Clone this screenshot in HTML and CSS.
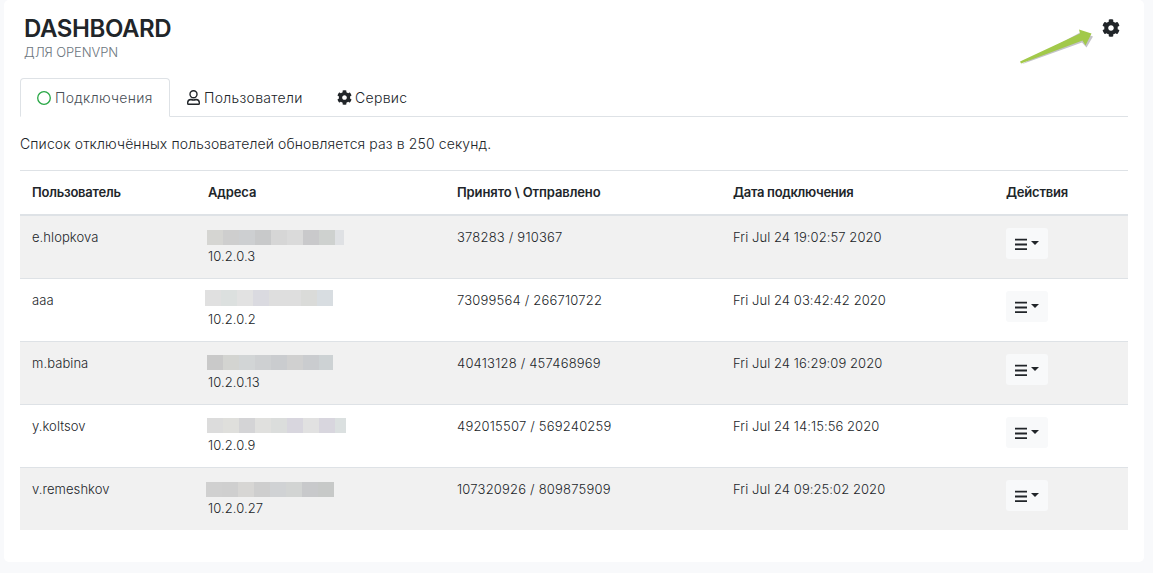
FILE: index.html
```html
<!DOCTYPE html>
<html lang="ru">
<head>
<meta charset="utf-8">
<title>Dashboard</title>
<link rel="stylesheet" href="styles.css">
</head>
<body>
<svg class="defs" width="0" height="0">
  <symbol id="gear" viewBox="0 0 512 512"><path fill="currentColor" d="M487.4 315.7l-42.6-24.600c4.300-23.200 4.300-47 0-70.200l42.600-24.600c4.900-2.800 7.100-8.600 5.500-14-11.100-35.600-30-67.800-54.700-94.600-3.800-4.100-10-5.100-14.800-2.300L380.800 110c-17.900-15.400-38.500-27.300-60.800-35.100V25.800c0-5.600-3.900-10.500-9.400-11.700-36.700-8.200-74.300-7.800-109.200 0-5.500 1.200-9.400 6.100-9.400 11.700V75c-22.200 7.900-42.800 19.800-60.800 35.100L88.700 85.500c-4.900-2.800-11-1.900-14.800 2.300-24.700 26.700-43.600 58.900-54.700 94.600-1.700 5.400.6 11.200 5.500 14L67.300 221c-4.300 23.200-4.300 47 0 70.200l-42.600 24.600c-4.900 2.800-7.100 8.600-5.500 14 11.100 35.600 30 67.800 54.700 94.600 3.800 4.100 10 5.100 14.800 2.300l42.600-24.600c17.900 15.400 38.500 27.300 60.800 35.100v49.200c0 5.600 3.900 10.500 9.400 11.700 36.700 8.200 74.300 7.800 109.200 0 5.500-1.200 9.400-6.100 9.400-11.700v-49.200c22.200-7.900 42.800-19.800 60.800-35.100l42.600 24.600c4.900 2.800 11 1.900 14.800-2.300 24.700-26.700 43.600-58.900 54.700-94.600 1.500-5.500-.7-11.300-5.600-14.100zM256 336c-44.100 0-80-35.900-80-80s35.900-80 80-80 80 35.900 80 80-35.900 80-80 80z"/></symbol>
  <symbol id="bars" viewBox="0 0 12 13"><path fill="#212529" d="M0 .7h12v1.700H0zM0 5.600h12v1.800H0zM0 10.300h12V12H0z"/></symbol>
</svg>
<main class="card">
  <header class="top">
    <div class="brand">
      <h1>DASHBOARD</h1>
      <p>ДЛЯ OPENVPN</p>
    </div>
    <div class="tools">
      <svg class="arrow" viewBox="0 0 76 42" width="76" height="42">
        <path fill="#c3c3c7" d="M2 39.500L63 17.500L67.500 22.500L74 11.500L62 7z"/>
        <path fill="#a2c94a" d="M1 36.500L61 8.500L60 4.500L72.500 8.500L66.500 20.500L63.500 15.500L2 38.500z"/>
      </svg>
      <svg class="gear-big"><use href="#gear"/></svg>
    </div>
  </header>
  <nav class="tabs">
    <a class="tab active"><svg class="ico circle" viewBox="0 0 14 14"><circle cx="7" cy="7" r="6.300" fill="none" stroke="#28a745" stroke-width="1.300"/></svg><span>Подключения</span></a>
    <a class="tab users"><svg class="ico person" viewBox="0 0 13 15"><g fill="none" stroke="#212529" stroke-width="1.400"><circle cx="6.500" cy="4.200" r="3.500"/><path d="M3.900 9.500C1.800 9.600.7 10.800.7 12.500v1q0 .8.800.8h10q.8 0 .8-.8v-1c0-1.700-1.100-2.900-3.200-3q-2.600 1-5.200 0z"/></g></svg><span>Пользователи</span></a>
    <a class="tab service"><svg class="ico gear"><use href="#gear"/></svg><span>Сервис</span></a>
  </nav>
  <p class="note">Список отключённых пользователей обновляется раз в 250 секунд.</p>
  <table class="list">
    <colgroup><col class="c1"><col class="c2"><col class="c3"><col class="c4"><col class="c5"></colgroup>
    <thead><tr><th>Пользователь</th><th>Адреса</th><th>Принято \ Отправлено</th><th>Дата подключения</th><th>Действия</th></tr></thead>
    <tbody>
      <tr><td>e.hlopkova</td><td><div class="mask m1"></div><div>10.2.0.3</div></td><td class="bytes">378283 / 910367</td><td>Fri Jul 24 19:02:57 2020</td><td><button class="menu"><svg><use href="#bars"/></svg><i></i></button></td></tr>
      <tr><td>aaa</td><td><div class="mask m2"></div><div>10.2.0.2</div></td><td class="bytes">73099564 / 266710722</td><td>Fri Jul 24 03:42:42 2020</td><td><button class="menu"><svg><use href="#bars"/></svg><i></i></button></td></tr>
      <tr><td>m.babina</td><td><div class="mask m3"></div><div>10.2.0.13</div></td><td class="bytes">40413128 / 457468969</td><td>Fri Jul 24 16:29:09 2020</td><td><button class="menu"><svg><use href="#bars"/></svg><i></i></button></td></tr>
      <tr><td>y.koltsov</td><td><div class="mask m4"></div><div>10.2.0.9</div></td><td class="bytes">492015507 / 569240259</td><td>Fri Jul 24 14:15:56 2020</td><td><button class="menu"><svg><use href="#bars"/></svg><i></i></button></td></tr>
      <tr><td>v.remeshkov</td><td><div class="mask m5"></div><div>10.2.0.27</div></td><td class="bytes">107320926 / 809875909</td><td>Fri Jul 24 09:25:02 2020</td><td><button class="menu"><svg><use href="#bars"/></svg><i></i></button></td></tr>
    </tbody>
  </table>
</main>
</body>
</html>
```
FILE: styles.css
```css
* { box-sizing: border-box; }
body { margin: 0; height: 573px; overflow: hidden; background: #f8f9fb; color: #212529; font: 300 13px/19px Inter, "Liberation Sans", sans-serif; }
.defs { position: absolute; }
h1, p { margin: 0; }
.card { width: 1140px; height: 562px; margin-left: 4px; padding: 0 16px; background: #fff; border-radius: 5px; }
.top { display: flex; justify-content: space-between; height: 78px; padding: 14px 8px 0 4px; }
h1 { font-size: 24px; line-height: 29px; font-weight: 600; letter-spacing: -.4px; }
.brand p { color: #6c757d; line-height: 19px; letter-spacing: -.1px; }
.tools { display: flex; align-items: flex-start; }
.arrow { margin: 11px 7px 0 0; }
.gear-big { width: 18px; height: 18px; margin-top: 5px; }
.tabs { display: flex; height: 39px; border-bottom: 1px solid #dee2e6; font-size: 14px; line-height: 21px; letter-spacing: .3px; }
.tab { display: flex; align-items: flex-start; padding-top: 9px; white-space: nowrap; }
.active { width: 150px; height: 39px; padding: 8px 0 0 16px; border: 1px solid #dee2e6; border-bottom-color: #fff; border-radius: 4px 4px 0 0; color: #495057; }
.users { width: 150px; padding-left: 17px; }
.service { padding-left: 17px; }
.ico { flex: none; margin-right: 4px; }
.circle { width: 14px; height: 14px; margin-top: 4px; }
.person { width: 13px; height: 15px; margin: 3px 4px 0 0; }
.gear { width: 15px; height: 15px; margin: 3px 3px 0 0; }
.note { height: 53px; padding-top: 16px; font-size: 14px; line-height: 21px; letter-spacing: .12px; }
.list { width: 1108px; table-layout: fixed; border-collapse: separate; border-spacing: 0; }
.c1 { width: 176px; }
.c2 { width: 249px; }
.c3 { width: 276px; }
.c4 { width: 273px; }
.c5 { width: 134px; }
th { height: 46px; padding: 0 12px; border-top: 1px solid #dee2e6; border-bottom: 2px solid #dee2e6; text-align: left; font-weight: 600; letter-spacing: -.22px; }
th:nth-child(2) { letter-spacing: -.1px; }
th:nth-child(3) { letter-spacing: -.1px; }
th:nth-child(4) { letter-spacing: -.3px; }
td { height: 63px; padding: 12px 12px 0; border-top: 1px solid #dee2e6; vertical-align: top; letter-spacing: .07px; }
.bytes { letter-spacing: .2px; }
tbody tr:first-child td { height: 62px; border-top: 0; }
tbody tr:nth-child(odd) { background: #f1f1f1; }
.mask { height: 15px; margin: 1px 0 3px -1px; }
.m1 { width: 137px; margin-top: 2px; margin-bottom: 2px; background: linear-gradient(90deg, #d5d5d2 16px, #cecece 16px 32px, #cdcfd1 32px 48px, #c8c9ca 48px 64px, #d6d6d6 64px 80px, #dadada 80px 96px, #c9c9cb 96px 112px, #ced1cf 112px 128px, #dfe1e4 128px); }
.m2 { width: 128px; height: 16px; margin: -1px 0 4px -3px; background: linear-gradient(90deg, #e0e0e0 16px, #dce0df 16px 32px, #e2e2e2 32px 48px, #dadae0 48px 64px, #dedede 64px 96px, #dadbd9 96px 112px, #d8dde1 112px); }
.m3 { width: 126px; background: linear-gradient(90deg, #c9c9c9 16px, #d3d4d1 16px 32px, #d2d5d6 32px 48px, #ced0d2 48px 64px, #cacccf 64px 80px, #d0d0d0 80px 96px, #cacccf 96px 112px, #cdd2d4 112px); }
.m4 { width: 139px; background: linear-gradient(90deg, #dcdcdc 16px, #dfdfdc 16px 32px, #d4d4d6 32px 48px, #e0e0de 48px 64px, #dbdddc 64px 80px, #d8d6de 80px 96px, #e1e1e1 96px 112px, #d8d6de 112px 128px, #dbe0e0 128px); }
.m5 { width: 128px; margin: 2px 0 2px -2px; background: linear-gradient(90deg, #d0d0d0 16px, #cfcfcf 16px 32px, #d7d6d4 32px 48px, #cecece 48px 64px, #d0d2d4 64px 80px, #d2d4d3 80px 96px, #c8c9cb 96px 112px, #c7c9c8 112px); }
.menu { display: flex; width: 42px; height: 31px; padding: 10px 0 0 9px; border: 0; border-radius: 3px; background: #f8f9fa; }
.menu svg { width: 12px; height: 13px; }
.menu i { margin: 3px 0 0 4px; border: 4px solid transparent; border-top-color: #212529; border-bottom: 0; }
```
